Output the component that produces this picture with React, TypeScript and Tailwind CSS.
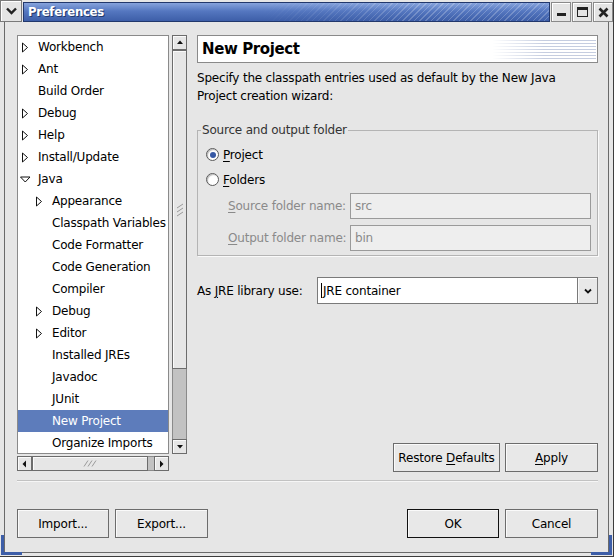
import React from 'react';

type Node = { label: string; level: number; arrow?: 'right' | 'down'; selected?: boolean };

const tree: Node[] = [
  { label: 'Workbench', level: 0, arrow: 'right' },
  { label: 'Ant', level: 0, arrow: 'right' },
  { label: 'Build Order', level: 0 },
  { label: 'Debug', level: 0, arrow: 'right' },
  { label: 'Help', level: 0, arrow: 'right' },
  { label: 'Install/Update', level: 0, arrow: 'right' },
  { label: 'Java', level: 0, arrow: 'down' },
  { label: 'Appearance', level: 1, arrow: 'right' },
  { label: 'Classpath Variables', level: 1 },
  { label: 'Code Formatter', level: 1 },
  { label: 'Code Generation', level: 1 },
  { label: 'Compiler', level: 1 },
  { label: 'Debug', level: 1, arrow: 'right' },
  { label: 'Editor', level: 1, arrow: 'right' },
  { label: 'Installed JREs', level: 1 },
  { label: 'Javadoc', level: 1 },
  { label: 'JUnit', level: 1 },
  { label: 'New Project', level: 1, selected: true },
  { label: 'Organize Imports', level: 1 },
];

function U({ children }: { children: React.ReactNode }) {
  return <span className="underline underline-offset-[2px] decoration-1">{children}</span>;
}

function Btn({ children, className, def }: { children: React.ReactNode; className: string; def?: boolean }) {
  return (
    <div
      className={`${className} h-[29px] flex items-center justify-center bg-[#e8e8e8] shadow-[inset_1px_1px_0_#fafafa] border ${
        def ? 'border-[#111]' : 'border-[#6c6c6c]'
      }`}
    >
      {children}
    </div>
  );
}

function Arrow({ dir }: { dir: 'up' | 'down' | 'left' | 'right' }) {
  const d = {
    up: 'M1 5 L4 1.5 L7 5 Z',
    down: 'M1 2 L4 5.5 L7 2 Z',
    left: 'M5 0.5 L1.5 4 L5 7.5 Z',
    right: 'M2 0.5 L5.5 4 L2 7.5 Z',
  }[dir];
  const vertical = dir === 'up' || dir === 'down';
  return (
    <svg width={vertical ? 8 : 7} height={vertical ? 7 : 8} viewBox={vertical ? '0 0 8 7' : '0 0 7 8'}>
      <path d={d} fill="#111" />
    </svg>
  );
}

function ScrollBtn({ dir }: { dir: 'up' | 'down' | 'left' | 'right' }) {
  return (
    <div className="w-[15px] h-[15px] shrink-0 border border-[#6c6c6c] bg-[#e6e6e6] shadow-[inset_1px_1px_0_#fafafa] flex items-center justify-center">
      <Arrow dir={dir} />
    </div>
  );
}

function Grip({ horizontal }: { horizontal?: boolean }) {
  return horizontal ? (
    <svg width="14" height="7" viewBox="0 0 14 7">
      <path d="M1 6.5 L5 0.5 M5 6.5 L9 0.5 M9 6.5 L13 0.5" stroke="#9a9a9a" strokeWidth="1" />
    </svg>
  ) : (
    <svg width="8" height="14" viewBox="0 0 8 14">
      <path d="M1 5 L7 1 M1 9 L7 5 M1 13 L7 9" stroke="#9a9a9a" strokeWidth="1" />
    </svg>
  );
}

function Radio({ checked }: { checked?: boolean }) {
  return (
    <div className="w-[13px] h-[13px] rounded-full border border-[#5a5a5a] bg-white shadow-[inset_1px_1px_1px_#bbb] flex items-center justify-center">
      {checked && <div className="w-[6px] h-[6px] rounded-full bg-[#3658a4]" />}
    </div>
  );
}

export default function App() {
  return (
    <div className="relative w-[614px] h-[557px] bg-[#e6e6e6] overflow-hidden border-r border-b border-[#3c3c3c] font-['DejaVu_Sans',sans-serif] text-[12px] tracking-[-0.2px] text-black">
      {/* title bar */}
      <div className="flex h-[22px]">
        <div className="w-[22px] h-[22px] border border-[#7a7a7a] bg-[#e4e4e4] shadow-[inset_1px_1px_0_#fff] flex items-center justify-center">
          <svg width="11" height="8" viewBox="0 0 11 8">
            <path d="M1 1.5 L5.5 6 L10 1.5" stroke="#222" strokeWidth="2.4" fill="none" />
          </svg>
        </div>
        <div className="relative mt-[2px] ml-[1px] w-[527px] h-[20px] border border-[#22386c] bg-[linear-gradient(to_bottom,#86a3dc,#5577c0_45%,#3d5ea8)] overflow-hidden">
          <div className="absolute inset-0 bg-[repeating-linear-gradient(135deg,rgba(255,255,255,0.22)_0px,rgba(255,255,255,0.22)_1px,transparent_1px,transparent_4px)] [mask-image:linear-gradient(to_right,transparent_0%,transparent_45%,black_75%)]" />
          <span className="relative pl-[4px] leading-[18px] text-white font-bold text-[13px] tracking-[-0.3px] font-['DejaVu_Sans_Condensed','DejaVu_Sans',sans-serif] font-stretch-condensed [text-shadow:1px_1px_0_#22386c]">
            Preferences
          </span>
        </div>
        <div className="ml-[1px] mt-[2px] flex gap-[1px]">
          <div className="w-[20px] h-[20px] border border-[#8a8a8a] bg-[#e4e4e4] shadow-[inset_1px_1px_0_#fff] flex items-center justify-center">
            <div className="mt-[4px] w-[9px] h-[3px] bg-[#222]" />
          </div>
          <div className="w-[20px] h-[20px] border border-[#8a8a8a] bg-[#e4e4e4] shadow-[inset_1px_1px_0_#fff] flex items-center justify-center">
            <div className="w-[11px] h-[10px] border border-[#222] border-t-[3px]" />
          </div>
          <div className="w-[20px] h-[20px] border border-[#8a8a8a] bg-[#e4e4e4] shadow-[inset_1px_1px_0_#fff] flex items-center justify-center">
            <svg width="11" height="11" viewBox="0 0 11 11">
              <path d="M1.5 1.5 L9.5 9.5 M9.5 1.5 L1.5 9.5" stroke="#222" strokeWidth="2.6" />
            </svg>
          </div>
        </div>
      </div>

      {/* frame */}
      <div className="ml-[4px] w-[605px] h-[531px] border-l border-r border-b border-[#6a6a6a] pl-[12px] pr-[10px] pt-[13px]">
        <div className="flex h-[437px]">
          {/* left column */}
          <div className="flex flex-col w-[170px]">
            <div className="flex">
              <div className="w-[152px] h-[419px] border border-[#8a8a8a] bg-white overflow-hidden">
                {tree.map((n, i) => (
                  <div
                    key={i}
                    className={`flex items-center h-[22px] whitespace-nowrap ${n.level === 0 ? 'pl-[3px]' : 'pl-[17px]'} ${
                      n.selected ? 'bg-[#5d7cbb] text-white' : ''
                    }`}
                  >
                    <div className="w-[17px] shrink-0 flex items-center">
                      {n.arrow === 'right' && (
                        <svg width="8" height="11" viewBox="0 0 8 11">
                          <path d="M1.5 1 L6.5 5.5 L1.5 10 Z" stroke="#111" strokeWidth="1" fill="none" />
                        </svg>
                      )}
                      {n.arrow === 'down' && (
                        <svg width="11" height="7" viewBox="0 0 11 7" className="-ml-[1px]">
                          <path d="M0.5 1 L10 1 L5.25 6 Z" stroke="#111" strokeWidth="1" fill="none" />
                        </svg>
                      )}
                    </div>
                    <span>{n.label}</span>
                  </div>
                ))}
              </div>
              {/* vertical scrollbar */}
              <div className="ml-[3px] w-[15px] h-[419px] flex flex-col bg-[#c2c2c2] border-x border-[#8a8a8a]">
                <div className="-mx-[1px]">
                  <ScrollBtn dir="up" />
                </div>
                <div className="-mx-[1px] h-[319px] border border-[#6c6c6c] bg-[#e6e6e6] shadow-[inset_1px_1px_0_#fafafa] flex items-center justify-center">
                  <Grip />
                </div>
                <div className="flex-1" />
                <div className="-mx-[1px]">
                  <ScrollBtn dir="down" />
                </div>
              </div>
            </div>
            {/* horizontal scrollbar */}
            <div className="mt-[2px] w-[152px] h-[15px] flex bg-[#c2c2c2]">
              <ScrollBtn dir="left" />
              <div className="w-[116px] h-[15px] border border-[#6c6c6c] bg-[#e6e6e6] shadow-[inset_1px_1px_0_#fafafa] flex items-center justify-center">
                <Grip horizontal />
              </div>
              <div className="flex-1 border-y border-[#8a8a8a]" />
              <ScrollBtn dir="right" />
            </div>
          </div>

          {/* right column */}
          <div className="ml-[10px] w-[401px] flex flex-col">
            <div className="h-[28px] border border-[#8a8a8a] bg-white flex items-center relative overflow-hidden">
              <span className="pl-[4px] font-bold text-[15px] tracking-[-0.4px]">New Project</span>
              <div className="absolute right-[1px] top-[4px] w-[104px] h-[19px] bg-[repeating-linear-gradient(to_bottom,#c5cde0_0px,#c5cde0_1px,#ffffff_1px,#ffffff_3px)] [mask-image:linear-gradient(to_right,transparent_0%,rgba(0,0,0,0.5)_25%,black_50%)]" />
            </div>

            <p className="mt-[6px] leading-[18px]">
              Specify the classpath entries used as default by the New Java
              <br />
              Project creation wizard:
            </p>

            <fieldset className="mt-[18px] border border-[#b4b4b4] shadow-[1px_1px_0_#fafafa] px-0 pb-[4px] pt-0 m-0 min-w-0">
              <legend className="ml-[3px] px-[1px] leading-[14px] text-[#333]">Source and output folder</legend>
              <div className="pt-[5px]">
                <div className="flex items-center h-[25px] pl-[8px] gap-[4px]">
                  <Radio checked />
                  <span>
                    <U>P</U>roject
                  </span>
                </div>
                <div className="flex items-center h-[25px] pl-[8px] gap-[4px]">
                  <Radio />
                  <span>
                    <U>F</U>olders
                  </span>
                </div>
                <div className="mt-[1px] flex items-center h-[26px] pl-[30px] pr-[6px]">
                  <span className="w-[122px] text-[#8a8a8a]">
                    <U>S</U>ource folder name:
                  </span>
                  <div className="flex-1 h-[26px] border border-[#9a9a9a] bg-[#eeeeee] flex items-center pl-[4px] text-[#8a8a8a]">src</div>
                </div>
                <div className="mt-[6px] flex items-center h-[26px] pl-[30px] pr-[6px]">
                  <span className="w-[122px] text-[#8a8a8a]">
                    <U>O</U>utput folder name:
                  </span>
                  <div className="flex-1 h-[26px] border border-[#9a9a9a] bg-[#eeeeee] flex items-center pl-[4px] text-[#8a8a8a]">bin</div>
                </div>
              </div>
            </fieldset>

            <div className="mt-[21px] flex items-center h-[27px]">
              <span>
                As <U>J</U>RE library use:
              </span>
              <div className="ml-auto w-[281px] h-[27px] border border-[#7a7a7a] bg-white flex">
                <div className="flex-1 flex items-center pl-[3px]">
                  <div className="w-[1px] h-[15px] bg-black" />
                  <span className="ml-[1px]">JRE container</span>
                </div>
                <div className="w-[20px] border-l border-[#7a7a7a] bg-[#e8e8e8] shadow-[inset_1px_1px_0_#fafafa] flex items-center justify-center">
                  <svg width="8" height="6" viewBox="0 0 8 6">
                    <path d="M1 1.5 L4 4.5 L7 1.5" stroke="#111" strokeWidth="1.8" fill="none" />
                  </svg>
                </div>
              </div>
            </div>

            <div className="flex-1" />

            <div className="flex justify-end">
              <Btn className="w-[107px]">
                <span>
                  Restore <U>D</U>efaults
                </span>
              </Btn>
              <Btn className="ml-[5px] w-[93px]">
                <span>
                  <U>A</U>pply
                </span>
              </Btn>
            </div>
          </div>
        </div>

        <div className="mt-[8px] h-[1px] bg-[#c2c2c2] shadow-[0_1px_0_#f6f6f6]" />

        <div className="mt-[28px] flex">
          <Btn className="w-[92px]">Import...</Btn>
          <Btn className="ml-[6px] w-[93px]">Export...</Btn>
          <div className="flex-1" />
          <Btn className="w-[92px]" def>
            OK
          </Btn>
          <Btn className="ml-[6px] w-[93px]">Cancel</Btn>
        </div>
      </div>

      {/* resize corner highlights */}
      <div className="absolute left-[1px] top-[535px] w-[21px] h-[20px] border-l-[3px] border-b-[3px] border-[#3d5ea8]" />
      <div className="absolute right-[1px] top-[535px] w-[21px] h-[20px] border-r-[3px] border-b-[3px] border-[#3d5ea8]" />
    </div>
  );
}
